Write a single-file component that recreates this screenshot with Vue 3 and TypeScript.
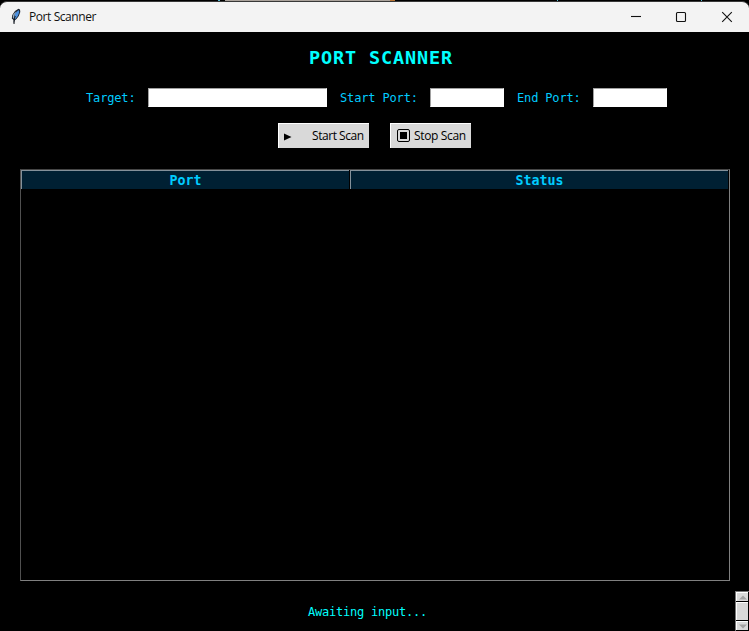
<script setup lang="ts">
import { ref } from 'vue'

const target = ref('')
const startPort = ref('')
const endPort = ref('')
const status = ref('Awaiting input...')
</script>

<template>
  <div class="desktop">
    <div class="backdrop"><i class="tick"></i><i class="edge"></i><i class="orange"></i><i class="tick small"></i><i class="tick small far"></i></div>
    <header class="titlebar">
      <svg class="feather" width="12" height="17" viewBox="0 0 12 17">
        <path d="M3.5 15.5 V12 L1.8 10.5 L2.3 7 L5 3 L8.5 .8 L10 1.5 L10.3 4 L8.8 8 L6.5 11 L4.6 12.5 Z" fill="#1b2430" />
        <path d="M4 10 L5 5.5 L8.5 2 L9.3 4 L7.8 8 L5.4 11 Z" fill="#4a90e0" />
        <path d="M2.8 9.5 L3.2 6.5 L6.5 3 L4.4 7.2 L3.7 11 Z" fill="#9baebd" />
        <path d="M4 16 L4.4 10.5 L5.2 8" fill="none" stroke="#10151c" stroke-width="1" />
      </svg>
      <span class="caption">Port Scanner</span>
      <div class="controls">
        <svg width="12" height="12" viewBox="0 0 12 12"><path d="M1 5.5H11" /></svg>
        <svg width="12" height="12" viewBox="0 0 12 12"><rect x="1.5" y="1.5" width="9" height="9" rx="1" /></svg>
        <svg width="12" height="12" viewBox="0 0 12 12"><path d="M1.2 1.2L10.8 10.8M10.8 1.2L1.2 10.8" /></svg>
      </div>
    </header>
    <main>
      <h1>PORT SCANNER</h1>
      <form class="fields" @submit.prevent>
        <label for="target">Target:</label>
        <input id="target" v-model="target" class="wide" />
        <label for="start">Start Port:</label>
        <input id="start" v-model="startPort" />
        <label for="end">End Port:</label>
        <input id="end" v-model="endPort" />
      </form>
      <div class="actions">
        <button class="start">
          <svg width="8" height="8" viewBox="0 0 8 8"><path d="M0 .5L7.5 4L0 7.5Z" /></svg>
          <span>Start Scan</span>
        </button>
        <button class="stop">
          <svg width="14" height="14" viewBox="0 0 14 14"><rect x=".5" y=".5" width="12" height="12" rx="1.5" fill="none" stroke="#000" /><path d="M3 3h7v7h-7z" /></svg>
          <span>Stop Scan</span>
        </button>
      </div>
      <section class="results">
        <div class="heading port">Port</div>
        <div class="heading state">Status</div>
      </section>
      <footer>
        <span class="status">{{ status }}</span>
        <div class="scrollbar">
          <div class="arrow"><svg width="8" height="5" viewBox="0 0 8 5"><path d="M0 4.5L4 .5L8 4.5Z" /></svg></div>
          <div class="thumb"></div>
          <div class="arrow"><svg width="8" height="5" viewBox="0 0 8 5"><path d="M0 .5H8L4 4.5Z" /></svg></div>
        </div>
      </footer>
    </main>
  </div>
</template>

<style>
body { margin: 0; background: #000; overflow: hidden; }
</style>

<style scoped>
* { box-sizing: border-box; }
.desktop { width: 749px; height: 631px; background: #000; overflow: hidden; display: flex; flex-direction: column; }
.backdrop { height: 1px; flex: none; display: flex; padding-left: 218px; background: #000; }
.tick { width: 2px; background: #58b6d0; margin-right: 5px; }
.edge { width: 165px; background: #aaa29b; }
.orange { width: 5px; background: #b87435; }
.small { width: 1px; margin: 0 0 0 162px; }
.small.far { margin-left: 143px; }
.titlebar { height: 31px; flex: none; display: flex; align-items: center; padding-left: 10px; background: #f3f3f3; border-top: 1px solid #383838; border-radius: 7px 7px 0 0; }
.feather { margin-bottom: 1px; }
.caption { margin-left: 7px; font: 12px/16px "Open Sans", sans-serif; letter-spacing: -.42px; color: #111; }
.controls { margin-left: auto; display: flex; gap: 34px; padding-right: 16px; }
.controls svg { fill: none; stroke: #111; stroke-width: 1.1; }
.controls svg:first-child { margin-right: -1px; }
main { flex: 1; display: flex; flex-direction: column; font-family: "DejaVu Sans Mono", monospace; }
h1 { margin: 13px 0 0; padding-left: 13px; text-align: center; font-size: 18.5px; line-height: 26px; letter-spacing: .86px; color: #0ff; }
.fields { display: flex; align-items: center; height: 19px; margin: 17px 0 0 86px; }
label { font-size: 12px; letter-spacing: -.15px; line-height: 18px; color: #00ccff; width: 62px; white-space: nowrap; }
label[for="start"] { width: 90px; margin-left: 13px; }
label[for="end"] { width: 76px; margin-left: 13px; }
input { width: 74px; height: 19px; border: 1px solid #fff; border-top-color: #a0a0a0; border-left-color: #a0a0a0; border-radius: 0; background: #fff; padding: 0 2px; outline: none; }
.wide { width: 179px; }
.actions { display: flex; gap: 21px; margin: 16px 0 0 278px; }
button { height: 25px; display: flex; align-items: center; padding: 0; border: 0 solid #fff; border-width: 1px 0 0 1px; border-radius: 0; background: #d9d9d9; color: #000; font: 12px/16px "Open Sans", sans-serif; letter-spacing: -.35px; white-space: nowrap; }
.start { width: 91px; padding-left: 5px; letter-spacing: -.45px; }
.start svg { margin-top: 2px; }
.start span { margin-left: 20px; }
.stop { width: 81px; padding-left: 6px; }
.stop span { margin-left: 3px; }
.results { width: 710px; height: 412px; margin: 21px 0 0 20px; display: flex; align-items: flex-start; border: 1px solid #808080; border-top-color: #454545; border-left-color: #505050; }
.heading { height: 19px; border: 0 solid #84919a; border-width: 1px 0 0 1px; background: #002033; color: #00ccff; font-size: 13.3px; font-weight: bold; line-height: 20px; letter-spacing: 0; text-align: center; }
.port { width: 328px; margin-right: 1px; }
.state { width: 378px; }
footer { flex: 1; display: flex; justify-content: flex-end; align-items: flex-end; }
.status { width: 120px; margin: 0 307px 10px 0; font-size: 12px; line-height: 18px; letter-spacing: -.22px; white-space: nowrap; color: #0ff; }
.scrollbar { width: 14px; height: 40px; background: #000; border: 0 solid #777; border-width: 1px 0 0 1px; display: flex; flex-direction: column; gap: 1px; }
.arrow, .thumb { width: 12px; background: #d9d9d9; border: 0 solid #fff; border-width: 1px 0 0 1px; }
.arrow { height: 9px; flex: none; display: flex; align-items: center; justify-content: center; }
.arrow svg { fill: #a3a3a3; }
.thumb { height: 18px; flex: none; }
</style>
